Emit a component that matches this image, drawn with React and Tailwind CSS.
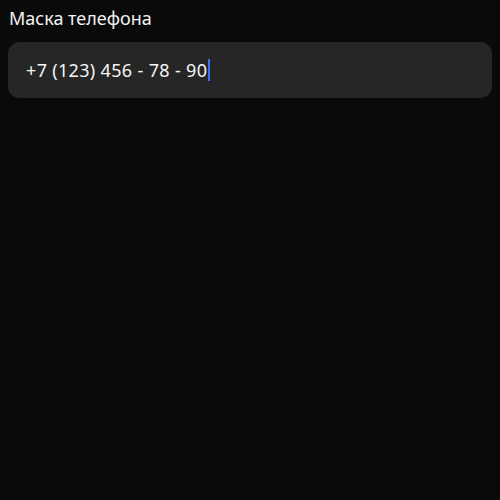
export default function App() {
    return (
        <div className="min-h-screen w-full bg-[#0a0a0a] p-2 font-['Noto_Sans',sans-serif]">
            <label className="block text-lg leading-5 text-[#f2f2f2] pl-px">Маска телефона</label>
            <div className="mt-[14px] h-14 rounded-xl bg-[#262626] px-[18px] flex items-center">
                <span className="text-lg tracking-[0.33px] text-[#f5f5f5]">+7 (123) 456 - 78 - 90</span>
                <span className="ml-px h-[22px] w-[1.5px] bg-[#3b72f0]" />
            </div>
        </div>
    )
}
